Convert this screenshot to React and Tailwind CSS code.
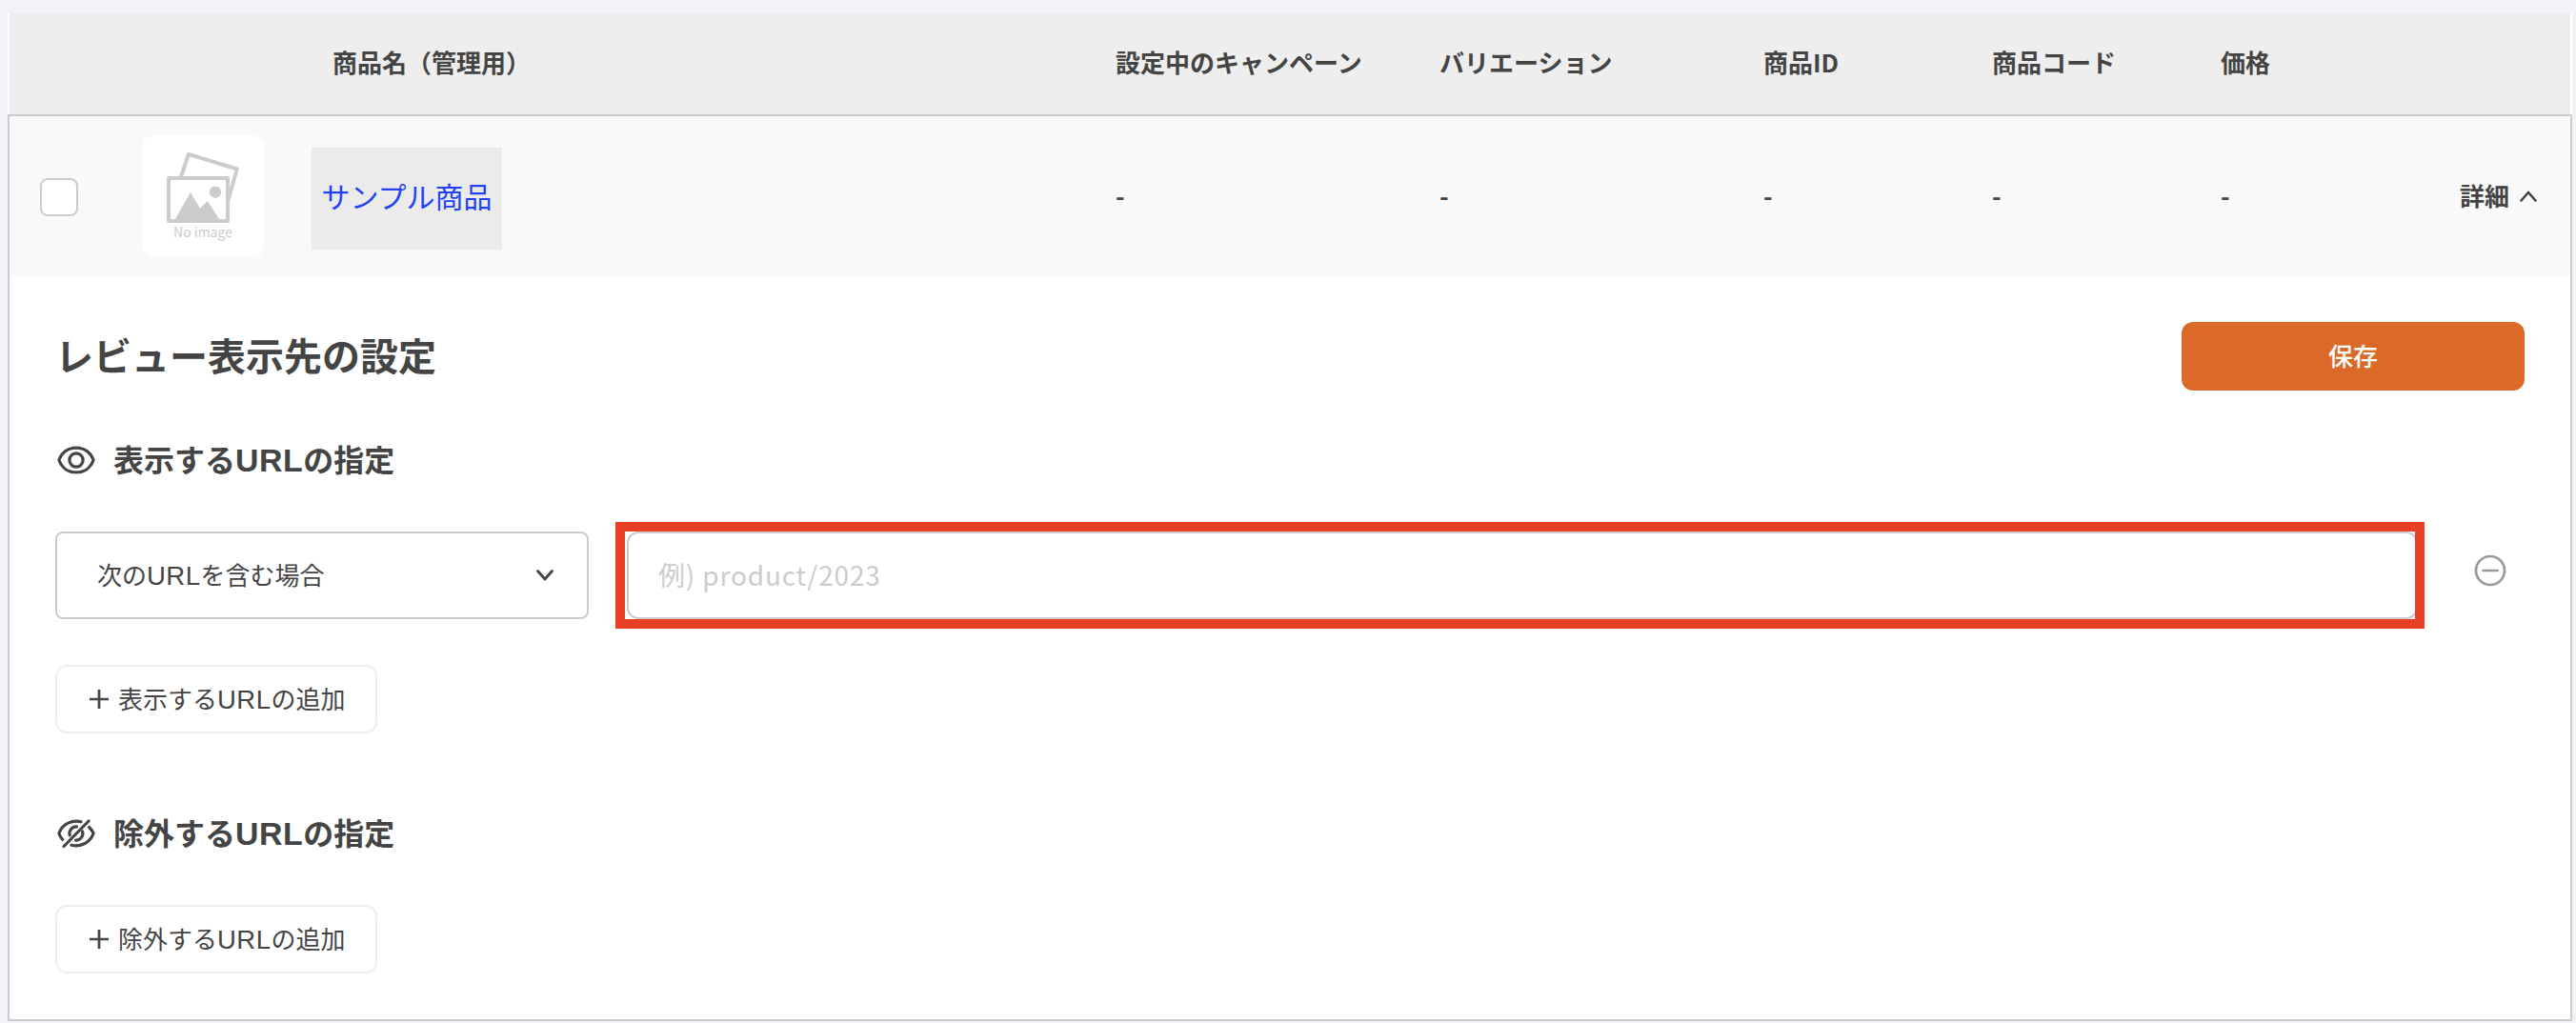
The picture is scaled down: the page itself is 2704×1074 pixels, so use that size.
import React, { useState } from 'react';

const columns = [
  { key: 'campaign', label: '設定中のキャンペーン', width: 'w-[340px]' },
  { key: 'variation', label: 'バリエーション', width: 'w-[340px]' },
  { key: 'productId', label: '商品ID', width: 'w-[240px]' },
  { key: 'productCode', label: '商品コード', width: 'w-[240px]' },
  { key: 'price', label: '価格', width: 'w-[240px]' },
];

const EyeIcon = () => (
  <svg width="40" height="30" viewBox="0 0 40 30" fill="none" stroke="currentColor" strokeWidth="3.2">
    <path d="M1.900 15C5 6.600 12 2.100 20 2.100S35 6.600 38.100 15C35 23.400 28 27.900 20 27.900S5 23.400 1.900 15Z" strokeLinejoin="round" />
    <circle cx="20" cy="15" r="7.1" />
  </svg>
);

const EyeOffIcon = () => (
  <svg width="40" height="30" viewBox="0 0 40 30" fill="none" stroke="currentColor" strokeWidth="3.2" strokeLinecap="round">
    <path d="M25 2.700C16 .6 5.500 4.500 1.900 15c.8 2.300 2 4.400 3.700 6.300" />
    <path d="M33.600 8.500c2 1.900 3.500 4.100 4.500 6.500C34.500 25 24 29.500 15 27.300" />
    <path d="M20.500 7.900A7.100 7.100 0 0 0 13.200 16.800" />
    <path d="M26.600 13A7.100 7.100 0 0 1 19.500 22.100" />
    <path d="M33 2 7 28.500" />
  </svg>
);

const NoImage = () => (
  <div className="flex h-32 w-32 flex-col items-center rounded-xl bg-white pt-[17px]">
    <svg width="78" height="76" viewBox="0 0 78 76" fill="none" stroke="#ccc" strokeWidth="4">
      <path d="M15.500 28 24 2.800 74.800 18.500 65 53" strokeLinejoin="round" />
      <rect x="3" y="28" width="62" height="45" fill="#fff" strokeLinejoin="round" />
      <circle cx="52" cy="42.700" r="6.2" fill="#ccc" stroke="none" />
      <path d="M9.300 72 26 43l10 17 7.700-8L56.700 72Z" fill="#ccc" stroke="none" />
    </svg>
    <span className="text-[14px] leading-4 text-[#ccc]">No image</span>
  </div>
);

// Latin letters are set slightly larger than the kana around them
const Url = () => (
  <span className="font-['Liberation_Sans',sans-serif] text-[1.06em] leading-none tracking-[0.015em]">URL</span>
);

const SectionTitle = ({ icon, children }) => (
  <h3 className="flex h-12 items-center gap-[19px] pl-[2px] text-[32px] font-bold leading-[48px]">
    {icon}
    <span className="pb-1">{children}</span>
  </h3>
);

const AddButton = ({ onClick, children }) => (
  <button
    type="button"
    onClick={onClick}
    className="flex h-[72px] w-[338px] items-center gap-[10px] rounded-xl border-2 border-[#eee] bg-white pl-[34px] text-[26px] leading-[36px]"
  >
    <svg width="20" height="20" viewBox="0 0 20 20" fill="none" stroke="currentColor" strokeWidth="2.7">
      <path d="M10 0v20M0 10h20" />
    </svg>
    <span className="whitespace-nowrap pb-[3px]">{children}</span>
  </button>
);

export default function App() {
  const [checked, setChecked] = useState(false);
  const [url, setUrl] = useState('');
  const product = { name: 'サンプル商品' };

  return (
    <div
      lang="ja"
      className="h-[1074px] w-[2704px] bg-[#f2f3f8] pl-2 pt-[14px] font-['Noto_Sans_CJK_JP',sans-serif] text-[26px] text-[#444]"
    >
      <div className="flex h-[106px] w-[2692px] items-center border-x-2 border-white bg-[#eee] pb-1 font-bold leading-[40px]">
        <div className="w-[1161px] pl-[339px]">商品名（管理用）</div>
        {columns.map((col) => (
          <div key={col.key} className={col.width}>{col.label}</div>
        ))}
      </div>

      <div className="h-[952px] w-[2692px] border-2 border-[#ccc] bg-white">
        <div className="flex h-[168px] items-center bg-[#f9f9f9]">
          <div className="flex w-[1161px] items-center pl-8">
            <button
              type="button"
              aria-label="選択"
              onClick={() => setChecked(!checked)}
              className={checked ? 'mt-[2px] h-10 w-10 rounded-lg border-2 border-[#ccc] bg-[#db6a29]' : 'mt-[2px] h-10 w-10 rounded-lg border-2 border-[#ccc] bg-white'}
            />
            <div className="ml-[67px]">
              <NoImage />
            </div>
            <a href="#" className="ml-[50px] mt-[5px] flex h-[107px] w-[200px] items-center justify-center bg-[#ebebeb] pb-[7px] text-[30px] leading-[44px] text-[#2442f5]">
              {product.name}
            </a>
          </div>
          {columns.map((col) => (
            <div key={col.key} className={`${col.width} pb-1 font-bold`}>{product[col.key] || '-'}</div>
          ))}
          <div className="flex items-center gap-[11px] pl-[11px] font-bold">
            <span className="pb-[3px]">詳細</span>
            <svg width="18" height="12" viewBox="0 0 18 12" fill="none" stroke="currentColor" strokeWidth="2.6" strokeLinecap="round" strokeLinejoin="round">
              <path d="M1.500 10.500 9 2l7.500 8.500" />
            </svg>
          </div>
        </div>

        <div className="px-12 pt-12">
          <div className="flex items-center justify-between">
            <h2 className="pb-1 text-[40px] font-bold leading-[60px]">レビュー表示先の設定</h2>
            <button type="button" className="h-[72px] w-[360px] rounded-xl bg-[#db6a29] pb-1 text-[26px] font-medium text-white">
              保存
            </button>
          </div>

          <div className="mt-[49px]">
            <SectionTitle icon={<EyeIcon />}>表示する<Url />の指定</SectionTitle>
          </div>
          <div className="mt-[51px] flex h-[92px] items-center">
            <button type="button" className="flex h-[92px] w-[560px] items-center justify-between rounded-lg border-2 border-[#ccc] pl-[42px] pr-[35px]">
              <span className="pb-[3px]">次の<Url />を含む場合</span>
              <svg width="18" height="12" viewBox="0 0 18 12" fill="none" stroke="currentColor" strokeWidth="2.8" strokeLinecap="round" strokeLinejoin="round">
                <path d="M1.500 1.500 9 10l7.500-8.500" />
              </svg>
            </button>
            <div className="relative ml-10 h-[92px] w-[1880px]">
              <input
                value={url}
                onChange={(e) => setUrl(e.target.value)}
                placeholder="例) product/2023"
                className="h-[92px] w-full rounded-xl border-2 border-[#ccc] bg-white pb-[3px] pl-[31px] text-[28px] tracking-[0.85px] outline-none placeholder:text-[#ccc]"
              />
              <div className="pointer-events-none absolute -bottom-[10px] -left-3 -right-[7px] -top-[10px] border-[10px] border-[#e94025]" />
            </div>
            <button type="button" aria-label="削除" className="-mt-[10px] ml-[59px] text-[#999]">
              <svg width="34" height="34" viewBox="0 0 34 34" fill="none" stroke="currentColor" strokeWidth="2.7">
                <circle cx="17" cy="17" r="15" />
                <path d="M9.500 17h15" strokeLinecap="round" />
              </svg>
            </button>
          </div>
          <div className="mt-12">
            <AddButton>表示する<Url />の追加</AddButton>
          </div>

          <div className="mt-[81px]">
            <SectionTitle icon={<EyeOffIcon />}>除外する<Url />の指定</SectionTitle>
          </div>
          <div className="mt-[51px]">
            <AddButton>除外する<Url />の追加</AddButton>
          </div>
        </div>
      </div>
    </div>
  );
}
